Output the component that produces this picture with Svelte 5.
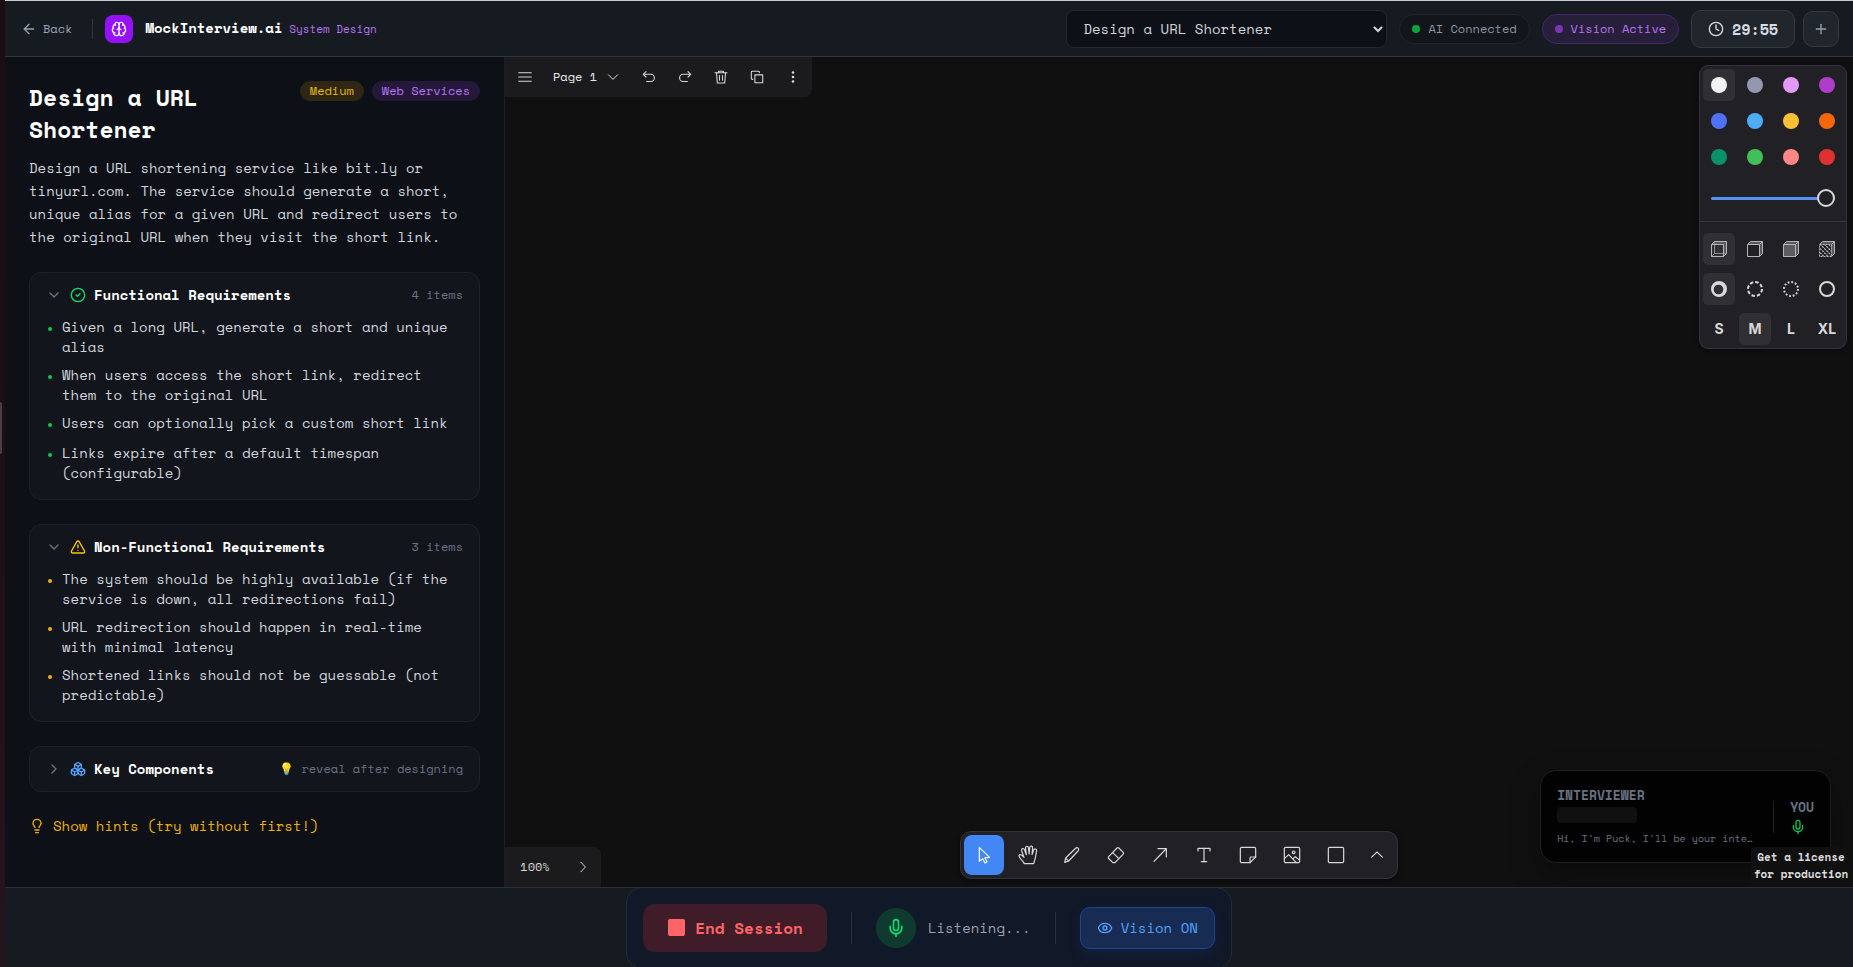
<script lang="ts">
	type Section = { id: string; title: string; icon: string; tone: string; note: string; open: boolean; items: string[] };

	const ICONS: Record<string, string[]> = {
		back: ['m12 19-7-7 7-7', 'M19 12H5'],
		brain: [
			'M12 18V5',
			'M15 13a4.17 4.17 0 0 1-3-4 4.17 4.17 0 0 1-3 4',
			'M17.598 6.5A3 3 0 1 0 12 5a3 3 0 1 0-5.598 1.5',
			'M17.997 5.125a4 4 0 0 1 2.526 5.77',
			'M18 18a4 4 0 0 0 2-7.464',
			'M19.967 17.483A4 4 0 1 1 12 18a4 4 0 1 1-7.967-.517',
			'M6 18a4 4 0 0 1-2-7.464',
			'M6.003 5.125a4 4 0 0 0-2.526 5.77',
		],
		clock: ['M12 2a10 10 0 1 0 0 20 10 10 0 0 0 0-20', 'M12 6v6l4 2'],
		plus: ['M5 12h14', 'M12 5v14'],
		down: ['m6 9 6 6 6-6'],
		right: ['m9 18 6-6-6-6'],
		check: ['M12 2a10 10 0 1 0 0 20 10 10 0 0 0 0-20', 'm9 12 2 2 4-4'],
		warn: ['m21.73 18-8-14a2 2 0 0 0-3.48 0l-8 14A2 2 0 0 0 4 21h16a2 2 0 0 0 1.73-3', 'M12 9v4', 'M12 17h.01'],
		boxes: [
			'M2.97 12.92A2 2 0 0 0 2 14.63v3.24a2 2 0 0 0 .97 1.71l3 1.8a2 2 0 0 0 2.06 0L12 19v-5.5l-5-3-4.03 2.42Z',
			'm7 16.5-4.74-2.85', 'm7 16.5 5-3', 'M7 16.5v5.17',
			'M12 13.5V19l3.97 2.38a2 2 0 0 0 2.06 0l3-1.8a2 2 0 0 0 .97-1.71v-3.24a2 2 0 0 0-.97-1.71L17 10.5l-5 3Z',
			'm17 16.5-5-3', 'm17 16.5 4.74-2.85', 'M17 16.5v5.17',
			'M7.97 4.42A2 2 0 0 0 7 6.13v4.37l5 3 5-3V6.13a2 2 0 0 0-.97-1.71l-3-1.8a2 2 0 0 0-2.06 0l-3 1.8Z',
			'M12 8 7.26 5.15', 'm12 8 4.74-2.85', 'M12 13.5V8',
		],
		bulb: ['M15 14c.2-1 .7-1.7 1.5-2.5 1-.9 1.5-2.2 1.5-3.5A6 6 0 0 0 6 8c0 1 .2 2.2 1.5 3.5.7.7 1.3 1.5 1.5 2.5', 'M9 18h6', 'M10 22h4'],
		mic: ['M12 19v3', 'M19 10v2a7 7 0 0 1-14 0v-2', 'M12 2a3 3 0 0 0-3 3v7a3 3 0 0 0 6 0V5a3 3 0 0 0-3-3'],
		eye: [
			'M2.062 12.348a1 1 0 0 1 0-.696 10.75 10.75 0 0 1 19.876 0 1 1 0 0 1 0 .696 10.75 10.75 0 0 1-19.876 0',
			'M12 9a3 3 0 1 0 0 6 3 3 0 0 0 0-6',
		],
	};

	// canvas editor icons, 30x30 box
	const TOOL_ICONS: Record<string, string[]> = {
		menu: ['M4.500 8h21', 'M4.500 15h21', 'M4.500 22h21'],
		undo: ['M10 6 5.500 10.500 10 15', 'M6 10.500h12a5.700 5.700 0 0 1 0 12h-7'],
		redo: ['M20 6l4.500 4.500L20 15', 'M24 10.500H12a5.700 5.700 0 0 0 0 12h7'],
		trash: ['M5 8h20', 'M11 8V5.500h8V8', 'M7.500 8l1.300 17h12.400l1.300-17', 'M12.500 12.500v8', 'M17.500 12.500v8'],
		duplicate: ['M11.500 11.500h13v13h-13z', 'M8 19H7a1.500 1.500 0 0 1-1.500-1.500V7A1.500 1.500 0 0 1 7 5.500h10.500A1.500 1.500 0 0 1 19 7v1'],
		select: ['M8 3.500v21l5-4 3.500 6.500 3-1.500-3.200-6.500 7-.5z'],
		hand: ['M9.500 28c-1-2.500-3-4.500-4.800-6.500C3 19.500 1 17.500 1.500 15.800 2.200 14 4.800 14.300 6.500 16l2.500 2.500L5.500 9C4.900 7.200 5.500 5.900 6.800 5.400c1.300-.4 2.500.3 3 1.900l2.700 7.200L11.300 5c-.2-1.700.4-2.900 1.800-3.100 1.500-.2 2.400.7 2.600 2.400l1 9 .9-9.300c.2-1.600 1-2.500 2.400-2.300 1.400.2 2.100 1.300 1.900 2.900l-.8 9.800 2.300-6.600c.6-1.500 1.600-2.200 3-1.800 1.400.5 1.800 1.700 1.500 3.200-1.200 5-1.300 8.500-2.400 12L23.500 28z'],
		draw: ['M4 26l1.500-6.500L20.500 4.800c1.200-1.200 2.700-1.200 3.800 0s1 2.600 0 3.800L10 24z', 'M6 20l3.500 3.700'],
		eraser: ['M4 17.500 16.500 4.500a2 2 0 0 1 2.800 0l6.500 6.500a2 2 0 0 1 0 2.800L13.500 26.500h-3.200L4 20.300a2 2 0 0 1 0-2.800z', 'M10 11.500l9.300 9'],
		arrow: ['M6 24.500 24 6', 'M12 5.500h12.500V18'],
		text: ['M6 9V5h18v4', 'M15 5v20', 'M11 25h8'],
		note: ['M18 26.500H5.500a2 2 0 0 1-2-2v-19a2 2 0 0 1 2-2h19a2 2 0 0 1 2 2V18z', 'M18 26.500V19.500A1.500 1.500 0 0 1 19.500 18h7'],
		image: ['M5.500 3.500h19a2 2 0 0 1 2 2v19a2 2 0 0 1-2 2h-19a2 2 0 0 1-2-2v-19a2 2 0 0 1 2-2z', 'M4 20l6-5.500 11.500 12', 'M16.500 20.500l3.500-3 6 5', 'M17.500 9a2 2 0 1 0 0 4 2 2 0 0 0 0-4'],
		rectangle: ['M5.500 3.500h19a2 2 0 0 1 2 2v19a2 2 0 0 1-2 2h-19a2 2 0 0 1-2-2v-19a2 2 0 0 1 2-2z'],
		up: ['M6 18.500 15 10l9 8.500'],
		chevDown: ['M6.500 11 15 19.500 23.500 11'],
		chevRight: ['M11 6l8.500 9L11 24'],
	};

	let sections = $state<Section[]>([
		{
			id: 'functional', title: 'Functional Requirements', icon: 'check', tone: 'green', note: '4 items', open: true,
			items: [
				'Given a long URL, generate a short and unique alias',
				'When users access the short link, redirect them to the original URL',
				'Users can optionally pick a custom short link',
				'Links expire after a default timespan (configurable)',
			],
		},
		{
			id: 'non-functional', title: 'Non-Functional Requirements', icon: 'warn', tone: 'yellow', note: '3 items', open: true,
			items: [
				'The system should be highly available (if the service is down, all redirections fail)',
				'URL redirection should happen in real-time with minimal latency',
				'Shortened links should not be guessable (not predictable)',
			],
		},
		{ id: 'components', title: 'Key Components', icon: 'boxes', tone: 'blue', note: '💡 reveal after designing', open: false, items: [] },
	]);

	const COLORS = [
		['white', '#f2f2f2'], ['grey', '#9398b0'], ['light-violet', '#e599f7'], ['violet', '#ae3ec9'],
		['blue', '#4f72fc'], ['light-blue', '#4dabf7'], ['yellow', '#ffc034'], ['orange', '#f76707'],
		['green', '#099268'], ['light-green', '#40c057'], ['light-red', '#ff8787'], ['red', '#e03131'],
	];
	const FILLS = ['none', 'semi', 'solid', 'pattern'];
	const DASHES = ['draw', 'dashed', 'dotted', 'solid'];
	const SIZES = ['S', 'M', 'L', 'XL'];
	const ACTIONS = ['undo', 'redo', 'trash', 'duplicate'];
	const TOOLS = ['select', 'hand', 'draw', 'eraser', 'arrow', 'text', 'note', 'image', 'rectangle'];

	let color = $state('white');
	let fill = $state('none');
	let dash = $state('draw');
	let size = $state('M');
	let tool = $state('select');
	let opacity = $state(100);
</script>

{#snippet icon(name: string, px = 16)}
	<svg class="icon" width={px} height={px} viewBox="0 0 24 24" aria-hidden="true">
		{#each ICONS[name] as d}<path {d} />{/each}
	</svg>
{/snippet}

{#snippet toolIcon(name: string, px = 18)}
	<svg class="icon thin" width={px} height={px} viewBox="0 0 30 30" aria-hidden="true">
		{#each TOOL_ICONS[name] as d}<path {d} />{/each}
	</svg>
{/snippet}

<div class="screen">
	<div class="edge"><span class="handle"></span></div>

	<div class="app">
		<header>
			<a href="/" class="back">{@render icon('back')}Back</a>
			<span class="rule"></span>
			<span class="logo">{@render icon('brain')}</span>
			<div class="brand"><strong>MockInterview.ai</strong> <span>System Design</span></div>

			<select aria-label="Problem">
				<option>Design a URL Shortener</option>
			</select>
			<span class="status"><i></i>AI Connected</span>
			<span class="status vision"><i></i>Vision Active</span>
			<span class="timer">{@render icon('clock')}29:55</span>
			<button class="add" aria-label="Add time">{@render icon('plus')}</button>
		</header>

		<main>
			<aside>
				<div class="problem">
					<h1>Design a URL Shortener</h1>
					<div class="tags">
						<span class="tag medium">Medium</span>
						<span class="tag web">Web Services</span>
					</div>
				</div>
				<p class="desc">Design a URL shortening service like bit.ly or tinyurl.com. The service should generate a short, unique alias for a given URL and redirect users to the original URL when they visit the short link.</p>

				{#each sections as s (s.id)}
					<section class={s.tone}>
						<button class="sec-head" aria-expanded={s.open} onclick={() => (s.open = !s.open)}>
							<span class="chev">{@render icon(s.open ? 'down' : 'right')}</span>
							<span class="sec-icon">{@render icon(s.icon)}</span>
							<span class="sec-title">{s.title}</span>
							<span class="sec-note">{s.note}</span>
						</button>
						{#if s.open && s.items.length}
							<ul>
								{#each s.items as item}
									<li><span class="dot"></span><span>{item}</span></li>
								{/each}
							</ul>
						{/if}
					</section>
				{/each}

				<button class="hints">{@render icon('bulb')}Show hints (try without first!)</button>
			</aside>

			<div class="canvas">
				<!-- Page menu -->
				<div class="menu-bar">
					<button aria-label="Menu">{@render toolIcon('menu')}</button>
					<button class="page">Page 1{@render toolIcon('chevDown', 16)}</button>
					{#each ACTIONS as a}
						<button aria-label={a}>{@render toolIcon(a)}</button>
					{/each}
					<button aria-label="More">
						<svg width="18" height="18" viewBox="0 0 18 18" fill="currentColor"><circle cx="9" cy="4.500" r="1.300" /><circle cx="9" cy="9" r="1.300" /><circle cx="9" cy="13.500" r="1.300" /></svg>
					</button>
				</div>

				<!-- Style panel -->
				<div class="styles">
					<div class="grid colors">
						{#each COLORS as [name, hex]}
							<button class:on={color === name} aria-label={name} onclick={() => (color = name)}>
								<span class="swatch" style="background:{hex}"></span>
							</button>
						{/each}
					</div>
					<label class="slider"><input type="range" aria-label="Opacity" min="0" max="100" bind:value={opacity} style="--fill:{opacity}%" /></label>
					<div class="grid options">
						{#each FILLS as f}
							<button class:on={fill === f} aria-label="Fill {f}" onclick={() => (fill = f)}>
								<svg class="box" width="16" height="16" viewBox="0 0 16 16">
									{#if f === 'pattern'}
										<defs>
											<pattern id="hatch" width="3" height="3" patternUnits="userSpaceOnUse" patternTransform="rotate(45)"><path d="M0 1.500h3" stroke="#d8d8d8" stroke-width="1.200" stroke-dasharray="2 1" /></pattern>
										</defs>
									{/if}
									<path class="side" d="M12.500 3.500l3-3v12l-3 3z M.500 3.500l3-3h12l-3 3z" />
									{#if f === 'none'}<path d="M3.500 .500v12h12M.500 15.500l3-3" class="faint" />{/if}
									<path d="M.500 3.500h12v12h-12z" fill={f === 'solid' ? '#5d5d5f' : f === 'pattern' ? 'url(#hatch)' : 'none'} stroke-dasharray={f === 'pattern' ? '2 1' : 'none'} />
									<path d="M.500 3.500l3-3h12v12l-3 3" />
									{#if f !== 'none'}<path d="M12.500 3.500l3-3" />{/if}
								</svg>
							</button>
						{/each}
						{#each DASHES as d}
							<button class:on={dash === d} aria-label="Dash {d}" onclick={() => (dash = d)}>
								<svg width="16" height="16" viewBox="0 0 16 16" fill="none" stroke="currentColor" stroke-width="2">
									{#if d === 'draw'}
										<path fill="currentColor" stroke="none" fill-rule="evenodd" d="M8 0a8 8 0 1 1 0 16A8 8 0 0 1 8 0zM7.500 3.700a4.800 4.800 0 1 0 0 9.600 4.800 4.800 0 0 0 0-9.600z" />
									{:else}
										<circle cx="8" cy="8" r="7" stroke-dasharray={d === 'dashed' ? '3.500 2' : d === 'dotted' ? '1.800 1.870' : 'none'} />
									{/if}
								</svg>
							</button>
						{/each}
						{#each SIZES as s}
							<button class="size" class:on={size === s} onclick={() => (size = s)}>{s}</button>
						{/each}
					</div>
				</div>

				<!-- Zoom -->
				<div class="zoom">
					<button>100%</button>
					<button aria-label="Expand minimap">{@render toolIcon('chevRight', 16)}</button>
				</div>

				<div class="tools">
					{#each TOOLS as t}
						<button class:on={tool === t} aria-label={t} onclick={() => (tool = t)}>{@render toolIcon(t, 20)}</button>
					{/each}
					<button class="more" aria-label="More tools">{@render toolIcon('up')}</button>
				</div>

				<div class="voice">
					<div class="speaker">
						<strong>INTERVIEWER</strong>
						<span class="wave"></span>
						<p>Hi, I'm Puck, I'll be your inte…</p>
					</div>
					<span class="bar"></span>
					<div class="you"><strong>YOU</strong>{@render icon('mic')}</div>
				</div>

				<a class="license" href="/license">Get a license for production</a>
			</div>
		</main>

		<footer>
			<div class="controls">
				<button class="end">
					<svg width="20" height="20" viewBox="0 0 20 20"><rect x="1" y="1" width="17" height="17" rx="2" fill="currentColor" /></svg>
					End Session
				</button>
				<span class="bar"></span>
				<div class="listening"><span class="mic">{@render icon('mic', 20)}</span>Listening...</div>
				<span class="bar"></span>
				<button class="vision-on">{@render icon('eye')}Vision ON</button>
			</div>
		</footer>
	</div>
</div>

<style>
:global(body) { margin:0; background:#0d1117; }
.screen { display:flex; height:100vh; overflow:hidden; font-family:"Space Mono","Liberation Mono",monospace; font-size:14px; line-height:20px; color:#d1d5dc; }
.screen * { box-sizing:border-box; }
button { font:inherit; color:inherit; background:none; border:0; padding:0; cursor:pointer; }
strong { font-weight:700; }
.icon { flex:none; display:block; fill:none; stroke:currentColor; stroke-width:2; stroke-linecap:round; stroke-linejoin:round; }
.icon.thin { stroke-width:1.8; }
.edge { flex:none; width:5px; display:flex; align-items:center; padding-bottom:112px; background:linear-gradient(#1a0e14,#1b0f15 40%,#26141d); }
.handle { width:2px; height:52px; background:#4b3e43; border-radius:0 2px 2px 0; }
.app { flex:1; min-width:0; display:flex; flex-direction:column; border-top:1px solid #c6cdd0; }

/* Header */
header { flex:none; height:56px; display:flex; align-items:center; padding:0 14px 0 16px; background:#161b22; border-bottom:1px solid #30363d; font-size:12px; line-height:16px; }
.back { display:flex; align-items:center; gap:6px; color:#99a1af; text-decoration:none; }
.rule { width:1px; height:20px; margin:0 12px 0 20px; background:#30363d; }
.logo { display:flex; align-items:center; justify-content:center; width:28px; height:28px; margin-right:12px; border-radius:8px; background:#9810fa; color:#fff; }
.brand { font-size:11px; }
.brand strong { font-size:14px; color:#fff; }
.brand span { color:#b873f3; }
select { width:321px; height:38px; margin-left:auto; padding:0 12px; background:#0d1117; border:1px solid #23282f; border-radius:8px; color:#d1d5dc; font:inherit; font-size:14px; }
.status { display:flex; align-items:center; gap:8px; height:30px; margin-left:12px; padding:0 12px; border:1px solid #20252b; border-radius:15px; background:#12161b; color:#8d95a2; }
.status i { width:8px; height:8px; border-radius:50%; background:#00a63e; }
.status.vision { background:#271f3a; border-color:#43276a; color:#b873f3; }
.status.vision i { background:#7a35b5; }
.timer { display:flex; align-items:center; gap:8px; height:38px; margin:0 8px 0 12px; padding:0 16px; border:1px solid #333941; border-radius:10px; background:#21262d; color:#d8dce2; font-size:15px; font-weight:700; }
.add { display:flex; align-items:center; justify-content:center; width:36px; height:36px; border:1px solid #333941; border-radius:10px; background:#21262d; color:#99a1af; }

main { flex:1; min-height:0; display:flex; }

/* Problem panel */
aside { flex:none; width:500px; padding:24px; border-right:1px solid #1a1e24; background:#0d1117; overflow:hidden; }
.problem { display:flex; align-items:flex-start; justify-content:space-between; gap:16px; }
h1 { margin:0; font-size:23px; line-height:32px; font-weight:700; color:#fff; }
.tags { flex:none; display:flex; gap:8px; }
.tag { padding:2px 10px; border-radius:10px; font-size:12px; line-height:16px; }
.tag.medium { background:#2f2614; color:#e6b706; }
.tag.web { background:#25193b; color:#b873f3; }
.desc { margin:11px 0 24px; line-height:23px; }
section { margin-bottom:24px; background:#12151b; border:1px solid #1e2228; border-radius:12px; }
.sec-head { display:flex; align-items:center; gap:8px; width:100%; padding:12px 16px; text-align:left; }
.chev { color:#6a7282; }
.sec-title { font-weight:700; color:#fff; }
.sec-note { margin-left:auto; font-size:12px; color:#6a7282; }
.green { --tone:#05df72; --dot:#00c950; }
.yellow { --tone:#fdc700; --dot:#f0b100; }
.blue { --tone:#51a2ff; --dot:#51a2ff; }
.sec-icon { color:var(--tone); }
ul { list-style:none; margin:0; padding:0 16px 16px; display:flex; flex-direction:column; gap:8px; }
li { display:flex; gap:8px; min-height:22px; }
li:not(:nth-child(3)) { min-height:0; }
.dot { flex:none; width:8px; display:flex; justify-content:center; padding-top:10px; }
.dot::after { content:''; width:4px; height:4px; border-radius:2px; background:var(--dot); }
.hints { display:flex; align-items:center; gap:8px; color:#f0b100; }

/* Canvas */
.canvas { position:relative; flex:1; min-width:0; overflow:hidden; background:#101011; color:#d8d8d8; }
.canvas button { display:flex; align-items:center; justify-content:center; }
.menu-bar { position:absolute; top:0; left:0; display:flex; height:40px; padding:0 1px 0 2px; border-bottom-right-radius:8px; background:#1b1b1d; }
.menu-bar button { width:36px; }
.menu-bar .page { width:88px; gap:8px; font-size:12px; color:#e6e6e6; }
.zoom { position:absolute; bottom:0; left:0; display:flex; height:40px; border-top-right-radius:8px; background:#1b1b1d; font-size:12px; }
.zoom button { width:36px; }
.zoom button:first-child { width:60px; }

.styles { position:absolute; top:8px; right:6px; width:148px; border:1px solid #33333f; border-radius:9px; background:#212125; box-shadow:0 1px 4px rgba(0,0,0,0.6); font-family:Inter,sans-serif; }
.grid { display:grid; grid-template-columns:repeat(4,32px); gap:4px; padding:3px; }
.grid button { height:32px; border-radius:5px; }
.grid .on { background:#303034; }
.grid .size { font-size:14px; font-weight:700; }
.grid.options { row-gap:8px; padding-top:11px; border-top:1px solid #37373b; }
.colors { padding-bottom:0; }
.swatch { width:16px; height:16px; border-radius:50%; }
.slider { display:flex; align-items:center; height:48px; padding:2px 11px 0; }
.slider input { appearance:none; width:100%; height:18px; margin:0; background:transparent; }
.slider input::-webkit-slider-runnable-track { height:3px; border-radius:2px; background:linear-gradient(90deg,#588ff2 var(--fill),#3a3a40 var(--fill)); }
.slider input::-webkit-slider-thumb { appearance:none; width:18px; height:18px; margin-top:-8px; border:2px solid #d8d8d8; border-radius:50%; background:#212125; }
.box { fill:none; stroke:#b5b5b7; overflow:visible; }
.box .side { fill:#5a5a5d; stroke:none; }
.box .faint { stroke:#8c8c8f; }

.tools { position:absolute; bottom:8px; left:50%; transform:translateX(-50%); display:flex; gap:4px; padding:3px; border:1px solid #33333f; border-radius:11px; background:#212125; box-shadow:0 1px 4px rgba(0,0,0,0.6); }
.tools button { width:40px; height:40px; border-radius:8px; }
.tools .on { background:#4387f4; color:#fff; }
.tools .more { width:34px; }

.voice { position:absolute; right:22px; bottom:24px; display:flex; align-items:center; gap:16px; height:93px; padding:0 16px; border:1px solid #1e1e20; border-radius:16px; background:#020202; color:#6a7282; box-shadow:0 12px 32px rgba(0,0,0,0.3); font-size:13px; line-height:16px; }
.speaker { width:200px; }
.speaker strong { display:block; }
.wave { display:block; width:80px; height:16px; margin:4px 0 8px; border-radius:4px; background:#101011; }
.speaker p { margin:0; font-size:10px; white-space:nowrap; }
.bar { width:1px; height:32px; background:#2a2f3a; }
.voice .bar { background:#242426; }
.you { display:flex; flex-direction:column; align-items:flex-start; gap:4px; }
.you .icon { color:#00c758; }
.license { position:absolute; right:0; bottom:0; width:102px; padding:2px 4px 4px 2px; border-top-left-radius:4px; background:#101011; color:#dcdcdc; font-size:11px; line-height:17px; font-weight:700; text-align:center; text-decoration:none; }

/* Session controls */
footer { flex:none; height:80px; display:flex; align-items:center; justify-content:center; overflow:hidden; border-top:1px solid #2b3037; background:#161b22; }
.controls { flex:none; display:flex; align-items:center; gap:24px; padding:16px; border:1px solid #232b37; border-radius:16px; background:#111827; }
.end { display:flex; align-items:center; gap:8px; height:48px; padding:0 24px; border-radius:12px; background:#401c28; color:#ff6467; font-size:16px; font-weight:700; }
.listening { display:flex; align-items:center; gap:12px; color:#99a1af; }
.mic { display:flex; align-items:center; justify-content:center; width:40px; height:40px; border-radius:50%; background:#0e3a2f; color:#05df72; }
.vision-on { display:flex; align-items:center; gap:8px; height:42px; padding:0 16px; border:1px solid #1d458f; border-radius:10px; background:#172b53; color:#51a2ff; box-shadow:0 6px 14px rgba(20,71,160,0.2); }
</style>
